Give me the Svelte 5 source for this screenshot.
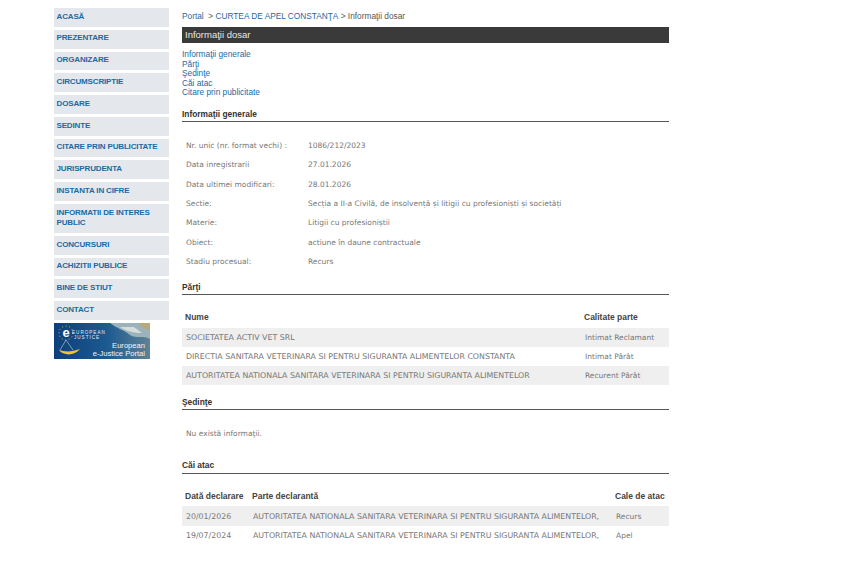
<script>
    const nav = ['ACASĂ', 'PREZENTARE', 'ORGANIZARE', 'CIRCUMSCRIPTIE', 'DOSARE', 'SEDINTE', 'CITARE PRIN PUBLICITATE', 'JURISPRUDENTA', 'INSTANTA IN CIFRE', 'INFORMATII DE INTERES PUBLIC', 'CONCURSURI', 'ACHIZITII PUBLICE', 'BINE DE STIUT', 'CONTACT'];
    const anchors = ['Informaţii generale', 'Părţi', 'Şedinţe', 'Căi atac', 'Citare prin publicitate'];
    const info = [
        ['Nr. unic (nr. format vechi) :', '1086/212/2023'],
        ['Data inregistrarii', '27.01.2026'],
        ['Data ultimei modificari:', '28.01.2026'],
        ['Sectie:', 'Secția a II-a Civilă, de insolvență și litigii cu profesioniști și societăți'],
        ['Materie:', 'Litigii cu profesioniștii'],
        ['Obiect:', 'actiune în daune contractuale'],
        ['Stadiu procesual:', 'Recurs']
    ];
    const parti = [
        ['SOCIETATEA ACTIV VET SRL', 'Intimat Reclamant'],
        ['DIRECTIA SANITARA VETERINARA SI PENTRU SIGURANTA ALIMENTELOR CONSTANTA', 'Intimat Pârât'],
        ['AUTORITATEA NATIONALA SANITARA VETERINARA SI PENTRU SIGURANTA ALIMENTELOR', 'Recurent Pârât']
    ];
    const cai = [
        ['20/01/2026', 'AUTORITATEA NATIONALA SANITARA VETERINARA SI PENTRU SIGURANTA ALIMENTELOR,', 'Recurs'],
        ['19/07/2024', 'AUTORITATEA NATIONALA SANITARA VETERINARA SI PENTRU SIGURANTA ALIMENTELOR,', 'Apel']
    ];
</script>

<div class="page">
    <aside class="sidebar">
        {#each nav as item}
            <a class="nav-item" href="#top">{item}</a>
        {/each}
        <svg class="banner" width="96" height="36" viewBox="0 0 96 36">
            <defs>
                <linearGradient id="bg" x1="0" y1="0" x2="1" y2="0">
                    <stop offset="0" stop-color="#0d3f7c"/>
                    <stop offset="0.55" stop-color="#1c5a90"/>
                    <stop offset="1" stop-color="#5f8296"/>
                </linearGradient>
            </defs>
            <rect width="96" height="36" fill="url(#bg)"/>
            <path d="M56 0 C64 6 70 7 76 12 C82 16 90 12 96 16 L96 0 Z" fill="#9db3ba"/>
            <path d="M66 4 C72 8 80 10 88 10 L80 4 Z" fill="#d4dcdc"/>
            <path d="M84 0 L96 0 L96 7 C91 6 87 3 84 0 Z" fill="#b9a878"/>
            <circle cx="12" cy="10" r="7" fill="none" stroke="#f2c82e" stroke-width="1" stroke-dasharray="1 2.6"/>
            <text x="12" y="14" class="e-mark">e</text>
            <text x="18" y="10.5" class="eu">EUROPEAN</text>
            <text x="20" y="16" class="eu">JUSTICE</text>
            <path d="M12 17 L6 27 M12 17 L19 27" stroke="#c8d4dc" stroke-width="0.6"/>
            <path d="M5 27 C11 29 18 29 26 26 C21 33 9 33 5 27 Z" fill="#f0c52a"/>
            <text x="91" y="25" class="b1">European</text>
            <text x="91" y="33" class="b1">e-Justice Portal</text>
        </svg>
    </aside>

    <main class="content">
        <div class="crumbs">
            <a href="#top">Portal</a><span>&nbsp;&nbsp;&gt;&nbsp;</span><a href="#top">CURTEA DE APEL CONSTANŢA</a><span>&nbsp;&gt;&nbsp;Informaţii dosar</span>
        </div>
        <div class="title">Informaţii dosar</div>
        <div class="anchors">
            {#each anchors as a}
                <a href="#top">{a}</a>
            {/each}
        </div>

        <h2 class="first">Informaţii generale</h2>
        <table class="info">
            <tbody>
                {#each info as row}
                    <tr><td class="label">{row[0]}</td><td>{row[1]}</td></tr>
                {/each}
            </tbody>
        </table>

        <h2 class="parti">Părţi</h2>
        <table class="grid">
            <thead>
                <tr><th>Nume</th><th class="calitate">Calitate parte</th></tr>
            </thead>
            <tbody>
                {#each parti as row}
                    <tr><td class="caps">{row[0]}</td><td>{row[1]}</td></tr>
                {/each}
            </tbody>
        </table>

        <h2 class="sedinte">Şedinţe</h2>
        <p class="empty">Nu există informaţii.</p>

        <h2 class="cai">Căi atac</h2>
        <table class="grid atac">
            <thead>
                <tr><th class="data">Dată declarare</th><th>Parte declarantă</th><th class="cale">Cale de atac</th></tr>
            </thead>
            <tbody>
                {#each cai as row}
                    <tr><td class="caps">{row[0]}</td><td class="caps">{row[1]}</td><td>{row[2]}</td></tr>
                {/each}
            </tbody>
        </table>
    </main>
</div>

<style>
    :global(body) {
        margin: 0;
        background: #fff;
    }

    .page {
        display: flex;
        gap: 13px;
        padding: 8px 0 0 54px;
        font-family: "Liberation Sans", Arial, sans-serif;
    }

    .sidebar {
        width: 115px;
        display: flex;
        flex-direction: column;
        gap: 3px;
    }

    .nav-item {
        display: block;
        background: #e4e8ec;
        color: #1a6aa5;
        font-size: 8px;
        font-weight: bold;
        letter-spacing: -0.15px;
        line-height: 10px;
        padding: 3.7px 2.5px 5.1px;
        text-decoration: none;
    }

    .banner {
        display: block;
    }

    .banner text {
        font-family: "Liberation Sans", Arial, sans-serif;
    }

    .e-mark {
        font-size: 13px;
        font-weight: bold;
        fill: #fff;
        text-anchor: middle;
    }

    .eu {
        font-size: 4.6px;
        fill: #e6eef4;
        letter-spacing: 1px;
    }

    .b1 {
        font-size: 7.6px;
        fill: #f2f5f6;
        text-anchor: end;
    }

    .content {
        width: 487px;
    }

    .crumbs {
        font-size: 8.3px;
        line-height: 12px;
        padding-top: 2px;
        color: #555;
    }

    .crumbs a {
        color: #1a6aa5;
        text-decoration: none;
    }

    .title {
        margin-top: 5px;
        background: #3a3a3a;
        color: #e8e8e8;
        font-size: 9.5px;
        line-height: 16px;
        padding-left: 3px;
    }

    .anchors {
        margin-top: 7px;
        display: flex;
        flex-direction: column;
        font-size: 8.3px;
        line-height: 9.6px;
    }

    .anchors a {
        color: #1a6aa5;
        text-decoration: none;
    }

    h2 {
        margin: 0;
        font-size: 8.4px;
        font-weight: bold;
        line-height: 12px;
        color: #333;
        padding-bottom: 1px;
        border-bottom: 1px solid #555;
    }

    h2.first {
        margin-top: 10px;
    }

    h2.parti {
        margin-top: 10px;
    }

    h2.sedinte {
        margin-top: 11px;
    }

    h2.cai {
        margin-top: 16px;
        padding-bottom: 2px;
    }

    table {
        border-collapse: collapse;
        width: 100%;
        font-family: "DejaVu Sans", Verdana, sans-serif;
        font-size: 7.5px;
        color: #777;
    }

    td {
        padding: 0 0 0 4px;
        height: 19.3px;
        white-space: nowrap;
    }

    .caps {
        font-size: 7.85px;
    }

    .info {
        margin-top: 14px;
    }

    .info .label {
        width: 118px;
    }

    .grid {
        margin-top: 11.5px;
        table-layout: fixed;
    }

    .grid.atac {
        margin-top: 11px;
    }

    .grid.atac td {
        height: 19.6px;
    }

    .grid th {
        font-family: "Liberation Sans", Arial, sans-serif;
        font-size: 8.5px;
        font-weight: bold;
        color: #444;
        text-align: left;
        padding: 0 0 0 3px;
        height: 21px;
    }

    .grid tbody tr:nth-child(odd) {
        background: #efefef;
    }

    .empty {
        margin: 14px 0 0;
        padding-left: 4px;
        font-family: "DejaVu Sans", Verdana, sans-serif;
        font-size: 7.5px;
        line-height: 19px;
        color: #777;
    }

    .calitate {
        width: 85px;
    }

    .data {
        width: 64px;
    }

    .cale {
        width: 54px;
    }
</style>
